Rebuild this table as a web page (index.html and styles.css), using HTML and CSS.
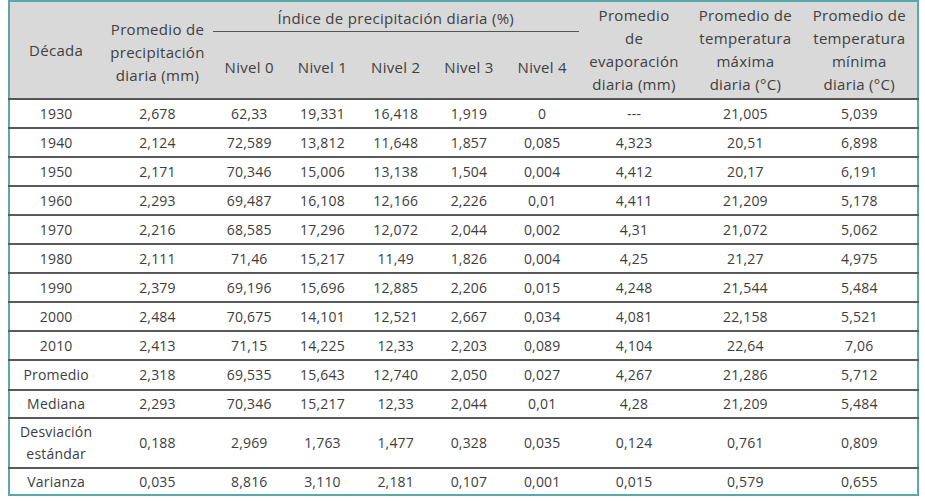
FILE: index.html
```html
<!DOCTYPE html>
<html lang="es">
<head>
<meta charset="utf-8">
<link rel="stylesheet" href="styles.css">
</head>
<body>
<div class="wrap">
<table class="tbl">
<colgroup>
<col class="c-dec"><col class="c-prec">
<col class="c-niv"><col class="c-niv"><col class="c-niv"><col class="c-niv"><col class="c-niv">
<col class="c-evap"><col class="c-tmax"><col class="c-tmin">
</colgroup>
<thead>
<tr class="h1">
<th rowspan="2">Década</th>
<th rowspan="2" class="prec">Promedio de<br>precipitación<br>diaria (mm)</th>
<th colspan="5" class="group">Índice de precipitación diaria (%)</th>
<th rowspan="2">Promedio<br>de<br>evaporación<br>diaria (mm)</th>
<th rowspan="2">Promedio de<br>temperatura<br>máxima<br>diaria (°C)</th>
<th rowspan="2">Promedio de<br>temperatura<br>mínima<br>diaria (°C)</th>
</tr>
<tr class="h2">
<th>Nivel 0</th><th>Nivel 1</th><th>Nivel 2</th><th>Nivel 3</th><th>Nivel 4</th>
</tr>
</thead>
<tbody>
<tr><td>1930</td><td>2,678</td><td>62,33</td><td>19,331</td><td>16,418</td><td>1,919</td><td>0</td><td>---</td><td>21,005</td><td>5,039</td></tr>
<tr><td>1940</td><td>2,124</td><td>72,589</td><td>13,812</td><td>11,648</td><td>1,857</td><td>0,085</td><td>4,323</td><td>20,51</td><td>6,898</td></tr>
<tr><td>1950</td><td>2,171</td><td>70,346</td><td>15,006</td><td>13,138</td><td>1,504</td><td>0,004</td><td>4,412</td><td>20,17</td><td>6,191</td></tr>
<tr><td>1960</td><td>2,293</td><td>69,487</td><td>16,108</td><td>12,166</td><td>2,226</td><td>0,01</td><td>4,411</td><td>21,209</td><td>5,178</td></tr>
<tr><td>1970</td><td>2,216</td><td>68,585</td><td>17,296</td><td>12,072</td><td>2,044</td><td>0,002</td><td>4,31</td><td>21,072</td><td>5,062</td></tr>
<tr><td>1980</td><td>2,111</td><td>71,46</td><td>15,217</td><td>11,49</td><td>1,826</td><td>0,004</td><td>4,25</td><td>21,27</td><td>4,975</td></tr>
<tr><td>1990</td><td>2,379</td><td>69,196</td><td>15,696</td><td>12,885</td><td>2,206</td><td>0,015</td><td>4,248</td><td>21,544</td><td>5,484</td></tr>
<tr><td>2000</td><td>2,484</td><td>70,675</td><td>14,101</td><td>12,521</td><td>2,667</td><td>0,034</td><td>4,081</td><td>22,158</td><td>5,521</td></tr>
<tr><td>2010</td><td>2,413</td><td>71,15</td><td>14,225</td><td>12,33</td><td>2,203</td><td>0,089</td><td>4,104</td><td>22,64</td><td>7,06</td></tr>
<tr class="r-prom"><td>Promedio</td><td>2,318</td><td>69,535</td><td>15,643</td><td>12,740</td><td>2,050</td><td>0,027</td><td>4,267</td><td>21,286</td><td>5,712</td></tr>
<tr class="r-med"><td>Mediana</td><td>2,293</td><td>70,346</td><td>15,217</td><td>12,33</td><td>2,044</td><td>0,01</td><td>4,28</td><td>21,209</td><td>5,484</td></tr>
<tr class="r-desv"><td>Desviación<br>estándar</td><td>0,188</td><td>2,969</td><td>1,763</td><td>1,477</td><td>0,328</td><td>0,035</td><td>0,124</td><td>0,761</td><td>0,809</td></tr>
<tr class="r-last"><td>Varianza</td><td>0,035</td><td>8,816</td><td>3,110</td><td>2,181</td><td>0,107</td><td>0,001</td><td>0,015</td><td>0,579</td><td>0,655</td></tr>
</tbody>
</table>
</div>
</body>
</html>
```

FILE: styles.css
```css
html, body {
  margin: 0;
  padding: 0;
  background: #ffffff;
}

.wrap {
  padding-left: 8px;
}

.tbl {
  width: 911px;
  table-layout: fixed;
  border-collapse: collapse;
  border: 2px solid #58a9a9;
  font-family: "Open Sans", "Liberation Sans", sans-serif;
  color: #3a3a3a;
}

.c-dec { width: 93px; }
.c-prec { width: 110px; }
.c-niv { width: 73px; }
.c-evap { width: 110px; }
.c-tmax { width: 112px; }
.c-tmin { width: 116px; }

.tbl thead th {
  background: #d9d9d9;
  font-weight: 500;
  font-size: 15px;
  letter-spacing: 0.3px;
  line-height: 23px;
  color: #404040;
  padding: 0;
  text-align: center;
  vertical-align: middle;
  white-space: nowrap;
}

.tbl thead tr.h1 th {
  height: 30px;
}

.tbl thead tr.h1 th.group {
  vertical-align: top;
  padding-top: 5px;
  border-bottom: 1.5px solid #555555;
  height: 24px;
}

.tbl thead tr.h2 th {
  height: 62px;
  padding-top: 4px;
}

.tbl thead tr.h1 th.prec {
  padding-top: 4px;
}

.tbl thead tr.h2 th,
.tbl thead tr.h1 th[rowspan] {
  border-bottom: 2px solid #555555;
}

.tbl tbody td {
  font-size: 14px;
  letter-spacing: 0.2px;
  line-height: 22px;
  height: 27px;
  padding: 0;
  text-align: center;
  vertical-align: middle;
  color: #3d3d3d;
  border-bottom: 2px solid #5a5a5a;
}

.tbl tbody tr.r-prom td {
  height: 28px;
}

.tbl tbody tr.r-med td {
  height: 26px;
}

.tbl tbody tr.r-desv td {
  height: 48px;
}

.tbl tbody tr.r-last td {
  border-bottom: none;
  height: 25px;
}
```
